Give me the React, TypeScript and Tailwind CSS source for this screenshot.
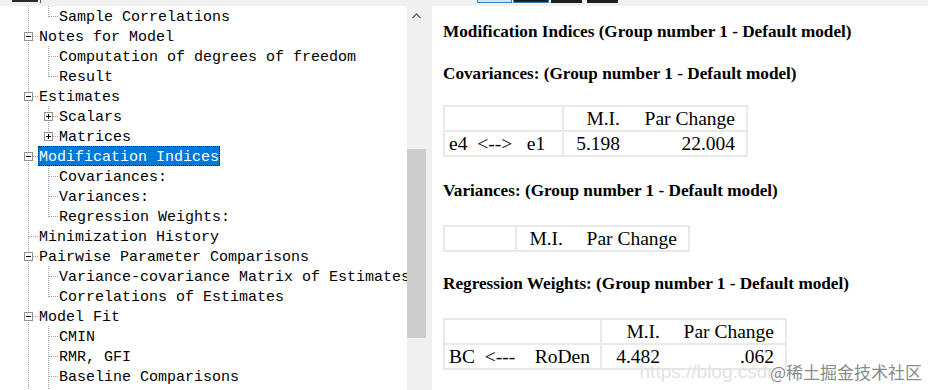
import React from 'react';

type Kind = 'line' | 'tee' | 'ell';
type Box = 'open' | 'closed' | undefined;

function Guide({ kind, box }: { kind: Kind; box?: Box }) {
  return (
    <svg width="20" height="20" className="shrink-0" shapeRendering="crispEdges">
      <line
        x1="10.5"
        y1="0"
        x2="10.5"
        y2={kind === 'ell' ? 11 : 20}
        stroke="#a0a0a0"
        strokeDasharray="1 1"
      />
      {kind !== 'line' && (
        <line x1="11" y1="10.5" x2="20" y2="10.5" stroke="#a0a0a0" strokeDasharray="1 1" />
      )}
      {box && (
        <>
          <rect x="6.5" y="6.5" width="8" height="8" fill="#fff" stroke="#919191" />
          <line x1="8" y1="10.5" x2="13" y2="10.5" stroke="#000" />
          {box === 'closed' && <line x1="10.5" y1="8" x2="10.5" y2="13" stroke="#000" />}
        </>
      )}
    </svg>
  );
}

const rows: { lv: 0 | 1; label: string; kind: Kind; box?: Box; selected?: boolean }[] = [
  { lv: 1, label: 'Sample Correlations', kind: 'ell' },
  { lv: 0, label: 'Notes for Model', kind: 'tee', box: 'open' },
  { lv: 1, label: 'Computation of degrees of freedom', kind: 'tee' },
  { lv: 1, label: 'Result', kind: 'ell' },
  { lv: 0, label: 'Estimates', kind: 'tee', box: 'open' },
  { lv: 1, label: 'Scalars', kind: 'tee', box: 'closed' },
  { lv: 1, label: 'Matrices', kind: 'ell', box: 'closed' },
  { lv: 0, label: 'Modification Indices', kind: 'tee', box: 'open', selected: true },
  { lv: 1, label: 'Covariances:', kind: 'tee' },
  { lv: 1, label: 'Variances:', kind: 'tee' },
  { lv: 1, label: 'Regression Weights:', kind: 'ell' },
  { lv: 0, label: 'Minimization History', kind: 'tee' },
  { lv: 0, label: 'Pairwise Parameter Comparisons', kind: 'tee', box: 'open' },
  { lv: 1, label: 'Variance-covariance Matrix of Estimates', kind: 'tee' },
  { lv: 1, label: 'Correlations of Estimates', kind: 'ell' },
  { lv: 0, label: 'Model Fit', kind: 'tee', box: 'open' },
  { lv: 1, label: 'CMIN', kind: 'tee' },
  { lv: 1, label: 'RMR, GFI', kind: 'tee' },
  { lv: 1, label: 'Baseline Comparisons', kind: 'tee' },
  { lv: 1, label: '', kind: 'tee' },
];

function Heading({ children, className = '' }: { children: React.ReactNode; className?: string }) {
  return (
    <div className={`font-['Liberation_Serif',serif] font-bold text-[17.2px] leading-[20px] text-black whitespace-nowrap ${className}`}>
      {children}
    </div>
  );
}

function MiTable({
  widths,
  rows,
}: {
  widths: [string, string, string];
  rows: string[][];
}) {
  return (
    <div className="self-start border-2 border-[#e9e9e9] font-['Liberation_Serif',serif] text-[19.5px] text-black">
      {rows.map((r, i) => (
        <div key={i} className={`flex ${i < rows.length - 1 ? 'border-b-2 border-[#e9e9e9]' : ''}`}>
          <div className={`${widths[0]} h-[23px] leading-[23px] pl-[4px] border-r-2 border-[#e9e9e9] whitespace-pre`}>{r[0]}</div>
          <div className={`${widths[1]} h-[23px] leading-[23px] pr-[12px] text-right`}>{r[1]}</div>
          <div className={`${widths[2]} h-[23px] leading-[23px] pr-[11px] text-right`}>{r[2]}</div>
        </div>
      ))}
    </div>
  );
}

export default function App() {
  return (
    <div className="w-[928px] h-[390px] overflow-hidden bg-[#f0f0f0] flex flex-col">
      {/* toolbar edge */}
      <div className="h-[6px] shrink-0 flex items-start">
        <div className="ml-[12px] w-[26px] h-[2px] bg-[#2a2a2a]" />
        <div className="ml-[2px] w-[1px] h-[3px] bg-[#555]" />
        <div className="ml-[436px] w-[35px] h-[3px] bg-[#cce4f7] border border-t-0 border-[#3c7fb1]" />
        <div className="ml-[1px] w-[36px] h-[3px] bg-[#1e1e1e] border border-t-0 border-[#3c7fb1]" />
        <div className="ml-[2px] w-[31px] h-[3px] bg-[#1e1e1e]" />
        <div className="ml-[5px] w-[31px] h-[3px] bg-[#1e1e1e]" />
      </div>

      <div className="flex flex-1 min-h-0">
        {/* tree */}
        <div className="w-[407px] shrink-0 bg-white overflow-hidden pl-[18px] font-['Liberation_Mono',monospace] text-[15px] text-black">
          {rows.map((r, i) => (
            <div key={i} className="flex h-[20px] items-center">
              {r.lv === 1 && <Guide kind="line" />}
              <Guide kind={r.kind} box={r.box} />
              {r.label && (
                <span
                  className={`h-[20px] pt-[3px] leading-[17px] px-[1px] whitespace-pre ${
                    r.selected ? 'bg-[#0078d7] text-white outline-1 outline-dotted outline-[#222] -outline-offset-1' : ''
                  }`}
                >
                  {r.label}
                </span>
              )}
            </div>
          ))}
        </div>

        {/* scrollbar */}
        <div className="w-[19px] shrink-0 bg-[#f0f0f0] flex flex-col">
          <div className="h-[19px] flex items-center justify-center">
            <svg width="9" height="6" viewBox="0 0 9 6">
              <polyline points="0.5,5 4.5,1 8.5,5" fill="none" stroke="#606060" strokeWidth="1.3" />
            </svg>
          </div>
          <div className="mt-[124px] h-[189px] bg-[#cdcdcd]" />
        </div>
        <div className="w-[6px] shrink-0 bg-[#f0f0f0]" />

        {/* content */}
        <div className="flex-1 bg-white relative pl-[11px] pt-[16px] flex flex-col">
          <Heading>Modification Indices (Group number 1 - Default model)</Heading>
          <Heading className="mt-[22px]">Covariances: (Group number 1 - Default model)</Heading>
          <div className="mt-[21px] flex">
            <MiTable
              widths={['w-[119px]', 'w-[68px]', 'w-[114px]']}
              rows={[
                ['', 'M.I.', 'Par Change'],
                ['e4\u00a0\u00a0<-->\u00a0\u00a0\u00a0e1', '5.198', '22.004'],
              ]}
            />
          </div>
          <Heading className="mt-[24px]">Variances: (Group number 1 - Default model)</Heading>
          <div className="mt-[24px] flex">
            <MiTable widths={['w-[72px]', 'w-[58px]', 'w-[113px]']} rows={[['', 'M.I.', 'Par Change']]} />
          </div>
          <Heading className="mt-[22px]">Regression Weights: (Group number 1 - Default model)</Heading>
          <div className="mt-[24px] flex">
            <MiTable
              widths={['w-[157px]', 'w-[70px]', 'w-[113px]']}
              rows={[
                ['', 'M.I.', 'Par Change'],
                ['BC\u00a0\u00a0<---\u00a0\u00a0\u00a0\u00a0RoDen', '4.482', '.062'],
              ]}
            />
          </div>

          {/* watermark */}
          <div className="absolute right-[6px] bottom-[4px] flex items-center whitespace-nowrap">
            <span className="-mr-[8px] font-['Liberation_Sans',sans-serif] text-[19px] text-[#e2e2e2]">
              https://blog.csdn
            </span>
            <span className="relative font-['Noto_Sans_CJK_SC',sans-serif] text-[17px] leading-[22px] text-[#8a8a8a] [text-shadow:0_0_2px_#fff,0_0_2px_#fff]">
              @稀土掘金技术社区
            </span>
          </div>
        </div>
      </div>
    </div>
  );
}
